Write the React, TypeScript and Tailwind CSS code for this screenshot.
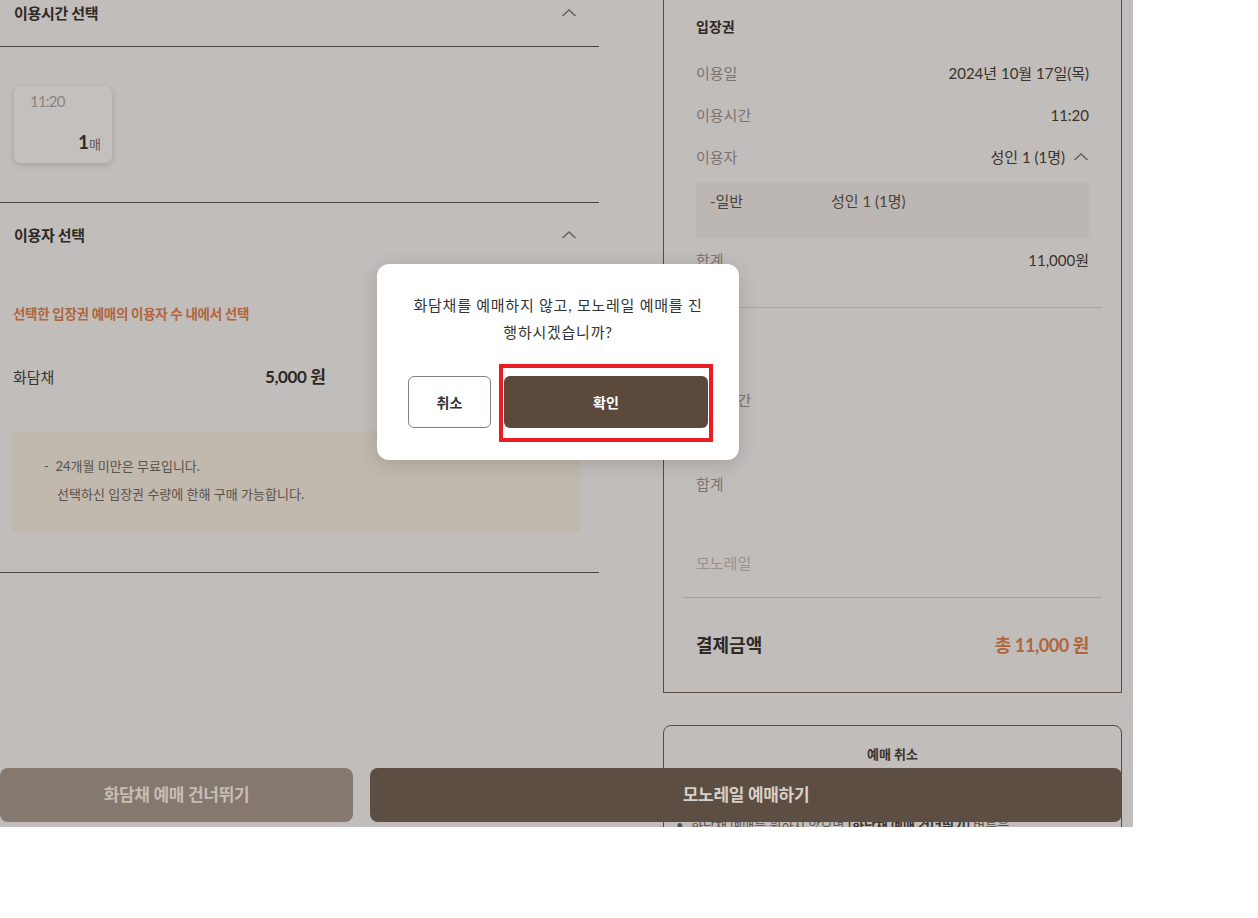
import React from "react";

const Chevron = ({ className = "" }: { className?: string }) => (
  <svg width="16" height="10" viewBox="0 0 16 10" className={className} fill="none">
    <path d="M1.5 8 L8 2 L14.5 8" stroke="#6b625c" strokeWidth="1.6" />
  </svg>
);

const Row = ({ label, value, extra }: { label: string; value?: string; extra?: React.ReactNode }) => (
  <div className="h-[42px] flex items-center justify-between">
    <span className="text-[15px] text-[#7b746e]">{label}</span>
    <span className="text-[15px] text-[#3a332e] flex items-center gap-[8px]">
      {value}
      {extra}
    </span>
  </div>
);

export default function App() {
  return (
    <div
      className="w-[1258px] h-[918px] bg-white"
      style={{ fontFamily: 'Lato, "Noto Sans CJK KR", sans-serif' }}
    >
      <div className="relative w-[1133px] h-[827px] overflow-hidden bg-[#c1bdba] flex">
        {/* Left column */}
        <div className="w-[599px] shrink-0">
          <div className="h-[47px] border-b border-[#4d443e] flex justify-between pl-[14px] pr-[22px]">
            <span className="text-[15px] leading-[26px] font-bold text-[#2e2925] tracking-[-0.3px]">이용시간 선택</span>
            <Chevron className="mt-[8px]" />
          </div>
          <div className="h-[156px] border-b border-[#4d443e] pt-[39px] pl-[14px]">
            <div className="w-[98px] h-[77px] rounded-[7px] bg-[#c4c0bd] shadow-[0_2px_6px_rgba(60,45,35,0.18)] relative pl-[16px] pt-[5px]">
              <div className="text-[15px] leading-[20px] text-[#8a847f] tracking-[-0.8px]">11:20</div>
              <div className="absolute right-[11px] bottom-[7px] flex items-baseline">
                <span className="text-[19px] font-bold text-[#2e2925]">1</span>
                <span className="text-[13px] text-[#5e5750]">매</span>
              </div>
            </div>
          </div>
          <div className="h-[370px] border-b border-[#4d443e]">
            <div className="flex justify-between pl-[14px] pr-[22px] pt-[19px]">
              <span className="text-[15px] leading-[26px] font-bold text-[#2e2925] tracking-[-0.3px]">이용자 선택</span>
              <Chevron className="mt-[8px]" />
            </div>
            <div className="pl-[13px] mt-[56px] text-[13.5px] leading-[20px] font-bold text-[#b0653d] tracking-[-0.3px]">
              선택한 입장권 예매의 이용자 수 내에서 선택
            </div>
            <div className="pl-[13px] mt-[41px] flex items-center h-[24px]">
              <span className="w-[252px] text-[15px] text-[#3a332e]">화담채</span>
              <span className="text-[17px] font-bold text-[#2e2925] tracking-[-0.4px]">5,000 원</span>
            </div>
            <div className="mx-[12px] w-[568px] mt-[42px] h-[102px] rounded-[6px] bg-[#c1b8ae] pt-[21px] text-[13px] leading-[28px] text-[#5a524c]">
              <div className="pl-[32px]">-&nbsp;&nbsp;24개월 미만은 무료입니다.</div>
              <div className="pl-[45px]">선택하신 입장권 수량에 한해 구매 가능합니다.</div>
            </div>
          </div>
        </div>

        {/* Right column */}
        <div className="ml-[64px] w-[459px] shrink-0">
          <div className="-mt-[20px] border border-[#574b42] px-[19px] pt-[36px] h-[713px]">
            <div className="px-[13px]">
              <div className="text-[14px] leading-[20px] font-bold text-[#2e2925]">입장권</div>
              <div className="mt-[15px]">
                <Row label="이용일" value="2024년 10월 17일(목)" />
                <Row label="이용시간" value="11:20" />
                <Row label="이용자" value="성인 1 (1명)" extra={<Chevron />} />
              </div>
              <div className="mt-[5px] h-[55px] bg-[#bcb7b3] pl-[14px] pt-[8px] flex text-[15px] leading-[20px] text-[#4a433d]">
                <span className="w-[121px]">-일반</span>
                <span>성인 1 (1명)</span>
              </div>
              <div className="h-[44px] flex items-center justify-between">
                <span className="text-[15px] text-[#7b746e]">합계</span>
                <span className="text-[15px] text-[#3a332e]">11,000원</span>
              </div>
            </div>
            <div className="mt-[25px] border-t border-[#a8a29d]" />
            <div className="px-[13px] pt-[29px]">
              <Row label="이용일" />
              <Row label="이용시간" />
              <Row label="이용자" />
              <Row label="합계" />
              <div className="h-[37px]" />
              <div className="h-[42px] flex items-center text-[15px] text-[#97918c]">모노레일</div>
            </div>
            <div className="mt-[13px] border-t border-[#a8a29d]" />
            <div className="px-[13px] h-[94px] flex items-center justify-between">
              <span className="text-[18px] font-bold text-[#2e2925]">결제금액</span>
              <span className="text-[18px] font-bold text-[#b0653d] tracking-[-0.4px]">총 11,000 원</span>
            </div>
          </div>
          <div className="mt-[32px] border border-[#574b42] rounded-t-[8px] h-[140px]">
            <div className="pt-[18px] text-center text-[13px] leading-[20px] font-bold text-[#3a332e]">예매 취소</div>
            <div className="mt-[51px] pl-[12px] flex items-center text-[13px] leading-[20px] text-[#5a524c]">
              <span className="w-[15px]">•</span>
              <span>
                화담채 예매를 원하지 않으면 <b className="text-[#3a332e]">[화담채 예매 건너뛰기]</b> 버튼을
              </span>
            </div>
          </div>
        </div>

        {/* Bottom action bar */}
        <div className="absolute left-0 top-[768px] w-[1122px] h-[54px] flex gap-[17px]">
          <button className="w-[353px] h-full rounded-[8px] bg-[#85786f] text-[17px] font-bold text-[#c7beb6] tracking-[-0.3px]">
            화담채 예매 건너뛰기
          </button>
          <button className="flex-1 h-full rounded-[8px] bg-[#5c4e43] text-[17px] font-bold text-[#d8d0c8] tracking-[-0.3px]">
            모노레일 예매하기
          </button>
        </div>

        {/* Dialog */}
        <div className="absolute left-[377px] top-[264px] w-[362px] h-[196px] rounded-[12px] bg-white shadow-[0_4px_20px_rgba(0,0,0,0.15)] px-[31px] pt-[28px]">
          <p className="text-center text-[15px] leading-[27px] text-[#333333] tracking-[0.75px]">
            화담채를 예매하지 않고, 모노레일 예매를 진행하시겠습니까?
          </p>
          <div className="mt-[30px] flex gap-[13px]">
            <button className="w-[83px] h-[52px] rounded-[6px] border border-[#8c8078] bg-white text-[14px] font-bold text-[#333333]">
              취소
            </button>
            <button className="flex-1 h-[52px] rounded-[6px] bg-[#5b4a3b] text-[14px] font-bold text-white">
              확인
            </button>
          </div>
        </div>

        {/* Highlight */}
        <div className="absolute left-[499px] top-[364px] w-[214px] h-[78px] border-[4px] border-[#ea1c24]" />
      </div>
    </div>
  );
}
